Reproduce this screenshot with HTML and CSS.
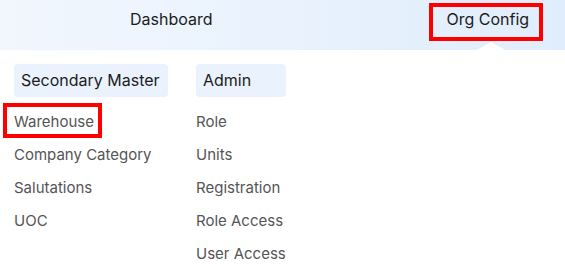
FILE: index.html
```html
<!DOCTYPE html>
<html lang="en">
<head>
  <meta charset="UTF-8" />
  <meta name="viewport" content="width=device-width, initial-scale=1.0"/>
  <title>Org Config Menu</title>
  <link rel="stylesheet" href="styles.css">
</head>
<body>
  <div class="topbar">
    <div class="nav-item">Dashboard</div>
    <div class="nav-item active mark">Org Config</div>
  </div>

  <div class="menu">
    <div class="menu-col col-secondary">
      <div class="menu-head">Secondary Master</div>
      <div class="menu-list">
        <a class="menu-link mark">Warehouse</a>
        <a class="menu-link">Company Category</a>
        <a class="menu-link">Salutations</a>
        <a class="menu-link">UOC</a>
      </div>
    </div>
    <div class="menu-col">
      <div class="menu-head">Admin</div>
      <div class="menu-list">
        <a class="menu-link">Role</a>
        <a class="menu-link">Units</a>
        <a class="menu-link">Registration</a>
        <a class="menu-link">Role Access</a>
        <a class="menu-link">User Access</a>
      </div>
    </div>
  </div>
</body>
</html>
```

FILE: styles.css
```css
body {
  margin: 0;
  font-family: Inter, "Noto Sans", sans-serif;
  background: #fff;
  color: #1c1c1c;
}
.topbar {
  display: flex;
  align-items: flex-start;
  gap: 203px;
  height: 50px;
  box-sizing: border-box;
  padding: 3px 0 0 112px;
  background: linear-gradient(90deg, #f2f7fe, #e0edfc);
}
.nav-item {
  position: relative;
  height: 38px;
  line-height: 33px;
  font-size: 16px;
  padding: 0 13px 0 18px;
  cursor: pointer;
}
.nav-item.active::before {
  content: "";
  position: absolute;
  left: 48px;
  top: 39px;
  border-left: 14px solid transparent;
  border-right: 14px solid transparent;
  border-bottom: 8px solid #fff;
}
.mark::after {
  content: "";
  position: absolute;
  inset: 0 -1px 0 0;
  border: 4px solid #f00;
}
.menu {
  display: flex;
  gap: 28px;
  padding: 14px 14px 0;
}
.menu-col {
  display: flex;
  flex-direction: column;
  align-items: flex-start;
}
.col-secondary {
  width: 154px;
}
.menu-head {
  background: #eaf2fd;
  border-radius: 4px;
  font-size: 16px;
  line-height: 33px;
  padding: 0 7px 0 7px;
  min-width: 76px;
  margin-bottom: 8px;
}
.col-secondary .menu-head {
  padding-right: 8px;
}
.menu-list {
  display: flex;
  flex-direction: column;
  align-items: flex-start;
}
.menu-link {
  position: relative;
  font-size: 15px;
  line-height: 33px;
  color: #555;
  cursor: pointer;
}
.menu-link.mark::after {
  inset: -2px -8px 0 -11px;
}
```
